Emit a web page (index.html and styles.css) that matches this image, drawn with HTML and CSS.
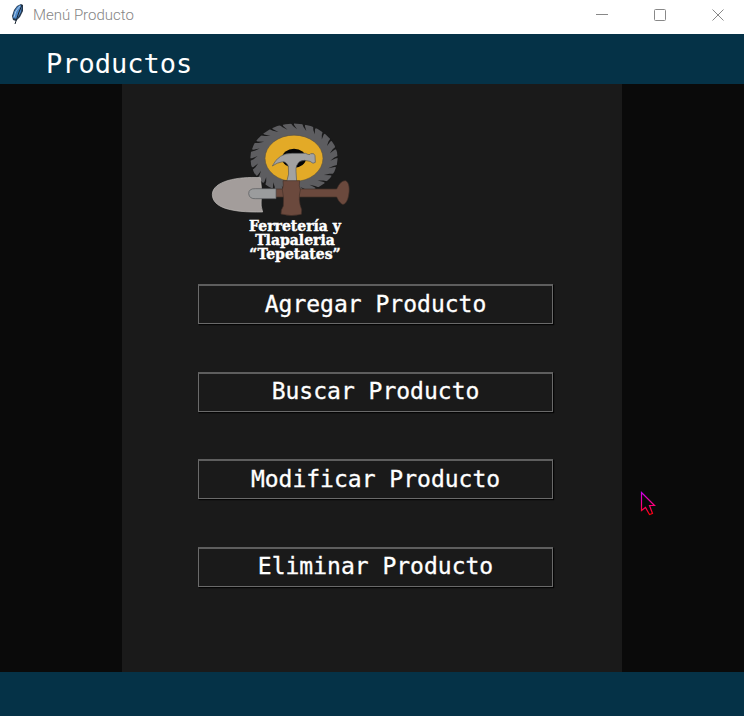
FILE: index.html
```html
<!DOCTYPE html>
<html lang="es">
<head>
<meta charset="utf-8">
<meta name="viewport" content="width=device-width, initial-scale=1">
<title>Menú Producto</title>
<link rel="stylesheet" href="styles.css">
</head>
<body>
<div class="titlebar">
  <svg class="feather" viewBox="0 0 14 22" aria-hidden="true">
    <path d="M10 1L12 2L12 8L9 14L5 18L2 17L1 13L3 7L6 3Z" fill="#26384d"/>
    <path d="M9 2L11 3L10 9L6 16L2 15L3 9L6 4Z" fill="#4d88c8"/>
    <path d="M11 2L8 9L4 21" fill="none" stroke="#182430"/>
    <path d="M9 3L5 8L3 14" fill="none" stroke="#a8c8e8"/>
  </svg>
  <span class="window-title">Menú Producto</span>
  <div class="window-controls">
    <button type="button" aria-label="Minimizar"><svg viewBox="0 0 12 12"><path d="M0 5.500H12"/></svg></button>
    <button type="button" aria-label="Maximizar"><svg viewBox="0 0 12 12"><rect x=".5" y=".5" width="11" height="11" rx="1"/></svg></button>
    <button type="button" aria-label="Cerrar"><svg viewBox="0 0 12 12"><path d="M.5 .5L11.500 11.500M11.500 .5L.5 11.500"/></svg></button>
  </div>
</div>
<header class="header"><h1>Productos</h1></header>
<main class="workspace">
  <section class="panel">
    <div class="brand">
      <svg class="logo" viewBox="32 24 420 282" aria-hidden="true">
        <defs>
          <path id="n" d="M-11 -134L0 -134L0 -126L9 -109L-3 -121Z"/>
          <g id="n4"><use href="#n"/><use href="#n" transform="rotate(15)"/><use href="#n" transform="rotate(30)"/><use href="#n" transform="rotate(45)"/></g>
        </defs>
        <g transform="translate(281 130) scale(1 .8)">
          <circle r="131" fill="#5d5d60"/>
          <g fill="#1a1a1a"><use href="#n4"/><use href="#n4" transform="rotate(60)"/><use href="#n4" transform="rotate(120)"/><use href="#n4" transform="rotate(180)"/><use href="#n4" transform="rotate(240)"/><use href="#n4" transform="rotate(300)"/></g>
          <circle r="87" fill="#e3aa27" stroke="#59513f" stroke-width="2"/>
          <circle r="36" fill="#050505"/>
        </g>
        <path d="M180 188C113 184 36 198 36 239C37 276 87 293 187 291Q180 275 183 250L183 216Z" fill="#a39d9b" stroke="#c0bcb9" stroke-width="2"/>
        <path d="M226 222H409Q420 197 435 197C447 200 449 224 444 245C440 263 431 271 424 267Q414 259 409 246H226Z" fill="#6b493d" stroke="#443028" stroke-width="2"/>
        <path d="M227 221H166Q145 220 145 236Q147 252 165 251H227Z" fill="#9b9c9d" stroke="#55585a" stroke-width="2"/>
        <path d="M216 153Q235 114 276 115H316Q328 122 331 116Q342 113 344 122L345 142Q339 149 329 139Q311 133 299 139Q285 150 287 169L289 200H259Q268 178 264 154Q257 137 244 141Q232 142 216 153Z" fill="#a2a2a2" stroke="#55585a" stroke-width="2"/>
        <path d="M248 197H298Q295 211 300 225Q292 255 304 284L303 298Q273 306 242 297Q241 285 249 273Q252 250 246 224Q251 211 248 197Z" fill="#6b493d" stroke="#443028" stroke-width="2"/>
      </svg>
      <p class="brand-name">Ferretería y<br>Tlapaleria<br>“Tepetates”</p>
    </div>
    <nav class="menu" aria-label="Productos">
      <button type="button">Agregar Producto</button>
      <button type="button">Buscar Producto</button>
      <button type="button">Modificar Producto</button>
      <button type="button">Eliminar Producto</button>
    </nav>
  </section>
  <svg class="pointer" viewBox="0 0 16 26" aria-hidden="true">
    <defs><linearGradient id="pointer-line" gradientUnits="userSpaceOnUse" x1="0" y1="1" x2="0" y2="24"><stop offset="0" stop-color="#c800f0"/><stop offset=".55" stop-color="#ff0080"/><stop offset="1" stop-color="#ff0000"/></linearGradient></defs>
    <path d="M1.500 1.500V19.500L5.500 16.500L9.500 23.500L12.500 22.500L9.500 14.500H14.500Z" fill="#080808" stroke="url(#pointer-line)" stroke-width="1.200"/>
  </svg>
</main>
<footer class="footer"></footer>
</body>
</html>
```
FILE: styles.css
```css
* {
  box-sizing: border-box;
}

body {
  display: flex;
  flex-direction: column;
  min-height: 100vh;
  margin: 0;
  background: #0a0a0a;
  color: #fff;
  font-family: "DejaVu Sans Mono", monospace;
}

.titlebar {
  display: flex;
  height: 34px;
  padding-left: 11px;
  background: #fff;
}

.feather {
  width: 14px;
  height: 22px;
  margin-top: 3px;
}

.window-title {
  margin-left: 8px;
  color: #858585;
  font: 300 15px/30px Roboto, sans-serif;
}

.window-controls {
  display: flex;
  height: 30px;
  margin-left: auto;
}

.window-controls button {
  display: grid;
  place-items: center;
  width: 58px;
  padding: 0 0 0 6px;
  border: 0;
  background: none;
}

.window-controls svg {
  width: 12px;
  height: 12px;
  fill: none;
  stroke: #888;
}

.header {
  height: 50px;
  padding: 14px 46px 0;
  background: #053247;
}

.header h1 {
  margin: 0;
  font-size: 27px;
  font-weight: 400;
  line-height: 32px;
}

.workspace {
  position: relative;
  display: flex;
  flex: 1;
  justify-content: center;
}

.panel {
  display: flex;
  flex-direction: column;
  width: 100%;
  max-width: 500px;
  padding: 39px 69px 85px 76px;
  background: #1a1a1a;
}

.brand {
  width: 168px;
  margin-left: 13px;
}

.logo {
  display: block;
  width: 140px;
  height: 94px;
}

.brand-name {
  margin: 2px 0 0;
  font: 700 14px/14px "DejaVu Serif", serif;
  text-align: center;
  -webkit-text-stroke: 0.4px #fff;
}

.menu {
  display: flex;
  flex: 1;
  flex-direction: column;
  gap: 24px;
  justify-content: space-between;
  margin-top: 23px;
}

.menu button {
  height: 40px;
  padding: 0 0 2px;
  border: 1px solid #6a6a6a;
  border-top: 2px solid #5e5e5e;
  background: #1a1a1a;
  box-shadow: 1px 1px 1px #050505;
  color: #fff;
  font: 400 23px/34px "DejaVu Sans Mono", monospace;
  -webkit-text-stroke: 0.3px #fff;
}

.pointer {
  position: absolute;
  top: 407px;
  right: 88px;
  width: 16px;
  height: 26px;
}

.footer {
  height: 44px;
  background: #053247;
}
```
